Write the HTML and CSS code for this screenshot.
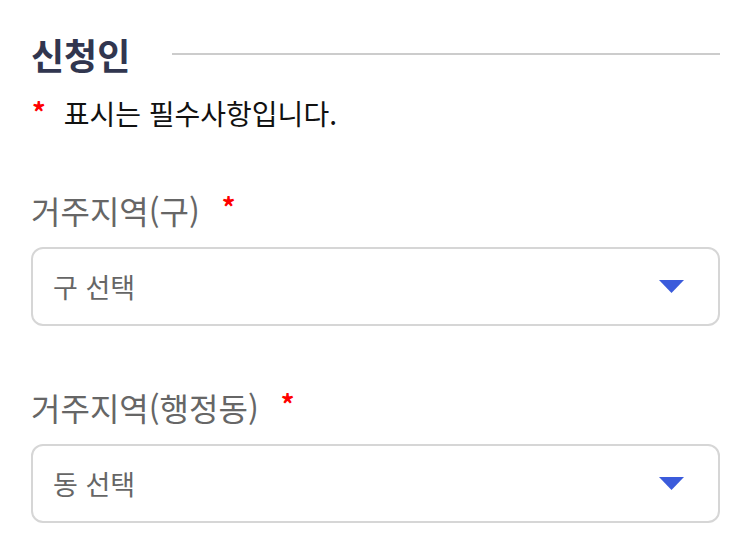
FILE: index.html
```html
<!DOCTYPE html>
<html lang="ko">
<head>
<meta charset="utf-8">
<link rel="stylesheet" href="styles.css">
</head>
<body>
<div class="page">
  <div class="section-head">
    <h2 class="section-title">신청인</h2>
    <div class="section-line"></div>
  </div>
  <p class="notice"><span class="req">*</span>표시는 필수사항입니다.</p>

  <div class="field">
    <div class="label">거주지역(구)<span class="req">*</span></div>
    <div class="select">
      <span class="placeholder">구 선택</span>
      <svg class="arrow" width="25" height="13" viewBox="0 0 25 13"><polygon points="0,0 25,0 12.5,13" fill="#3b5bdb"/></svg>
    </div>
  </div>

  <div class="field">
    <div class="label">거주지역(행정동)<span class="req">*</span></div>
    <div class="select">
      <span class="placeholder">동 선택</span>
      <svg class="arrow" width="25" height="13" viewBox="0 0 25 13"><polygon points="0,0 25,0 12.5,13" fill="#3b5bdb"/></svg>
    </div>
  </div>
</div>
</body>
</html>
```
FILE: styles.css
```css
* { box-sizing: border-box; }
body {
  margin: 0;
  background: #fff;
  font-family: "Noto Sans CJK KR", "Noto Sans", sans-serif;
}
.page {
  padding: 28px 30px 0 31px;
}
.section-head {
  display: flex;
  align-items: center;
  gap: 42px;
  height: 52px;
}
.section-title {
  margin: 0;
  font-size: 36px;
  font-weight: 700;
  color: #31364f;
  line-height: 1;
}
.section-line {
  flex: 1;
  height: 2px;
  background: #cccccc;
}
.notice {
  margin: 14px 0 0 1px;
  font-size: 28px;
  color: #111;
  line-height: 36px;
}
.notice .req {
  margin-right: 18px;
  vertical-align: 2px;
}
.req {
  color: #f00;
  font-size: 27px;
  font-weight: 700;
}
.field {
  margin-top: 54px;
}
.field + .field {
  margin-top: 56px;
}
.label {
  font-size: 32px;
  color: #666;
  line-height: 44px;
}
.label .req {
  margin-left: 22px;
  vertical-align: 6px;
}
.select {
  margin-top: 15px;
  height: 79px;
  border: 2px solid #d6d6d6;
  border-radius: 12px;
  display: flex;
  align-items: center;
  justify-content: space-between;
  padding: 0 34px 0 20px;
}
.placeholder {
  font-size: 27px;
  color: #666;
}
.arrow {
  display: block;
}
```
